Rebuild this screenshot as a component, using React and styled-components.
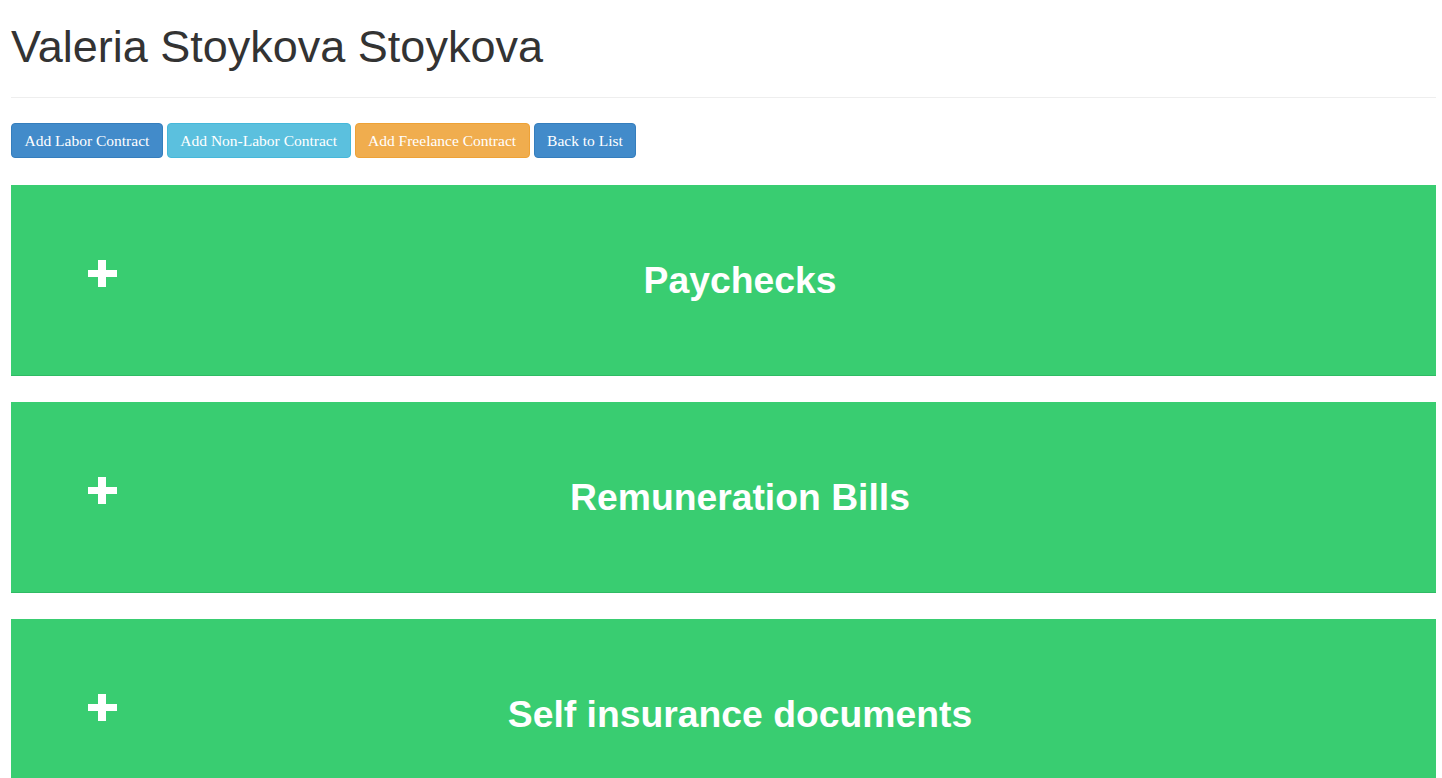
import styled, { createGlobalStyle } from "styled-components";

const GlobalStyle = createGlobalStyle`
    html, body {
        margin: 0;
        padding: 0;
        overflow: hidden;
        background: #fff;
    }
    body {
        font-family: "Liberation Sans", Arial, sans-serif;
        color: #333;
    }
`;

const buttons = [
    { label: "Add Labor Contract", bg: "#428bca", border: "#357ebd" },
    { label: "Add Non-Labor Contract", bg: "#5bc0de", border: "#46b8da" },
    { label: "Add Freelance Contract", bg: "#f0ad4e", border: "#eea236" },
    { label: "Back to List", bg: "#428bca", border: "#357ebd" },
];

const sections = ["Paychecks", "Remuneration Bills", "Self insurance documents"];

function PlusIcon() {
    return (
        <svg width="29" height="27" viewBox="0 0 29 27">
            <rect x="10" y="0" width="8" height="27" fill="#fff" />
            <rect x="0" y="10" width="29" height="7" fill="#fff" />
        </svg>
    );
}

function App() {
    return (
        <>
            <GlobalStyle />
            <Page>
                <PageHeader>
                    <h1>Valeria Stoykova Stoykova</h1>
                </PageHeader>
                <Toolbar>
                    {buttons.map((b) => (
                        <ActionButton key={b.label} bg={b.bg} border={b.border}>
                            {b.label}
                        </ActionButton>
                    ))}
                </Toolbar>
                <Panels>
                    {sections.map((title) => (
                        <Panel key={title}>
                            <Toggle>
                                <PlusIcon />
                            </Toggle>
                            <PanelTitle>{title}</PanelTitle>
                        </Panel>
                    ))}
                </Panels>
            </Page>
        </>
    );
}

export default App;

const Page = styled.div`
    margin: 0 6px 0 11px;
`;

const PageHeader = styled.div`
    padding-top: 22px;
    padding-bottom: 25px;
    border-bottom: 1px solid #eee;
    h1 {
        margin: 0;
        font-family: "Liberation Sans", Arial, sans-serif;
        font-size: 45px;
        font-weight: 400;
        line-height: 1.1;
        color: #333;
    }
`;

const Toolbar = styled.div`
    display: flex;
    gap: 4px;
    margin-top: 25px;
    margin-bottom: 27px;
`;

const ActionButton = styled.button`
    font-family: "Liberation Serif", "Times New Roman", serif;
    font-size: 15.5px;
    line-height: 21px;
    padding: 6px 12.5px;
    color: #fff;
    background: ${(p) => p.bg};
    border: 1px solid ${(p) => p.border};
    border-radius: 4px;
    cursor: pointer;
    white-space: nowrap;
`;

const Panels = styled.div`
    display: flex;
    flex-direction: column;
    gap: 26px;
`;

const Panel = styled.div`
    display: flex;
    align-items: center;
    height: 190px;
    padding: 0 73px 0 77px;
    background: #39cd71;
    border-bottom: 1px solid #2fbb64;
`;

const Toggle = styled.div`
    display: flex;
    width: 29px;
    margin-bottom: 12px;
`;

const PanelTitle = styled.h2`
    flex: 1;
    margin: 2px 0 0;
    text-align: center;
    font-family: "Liberation Sans", Arial, sans-serif;
    font-size: 37.3px;
    font-weight: 700;
    line-height: 1;
    color: #fff;
`;
